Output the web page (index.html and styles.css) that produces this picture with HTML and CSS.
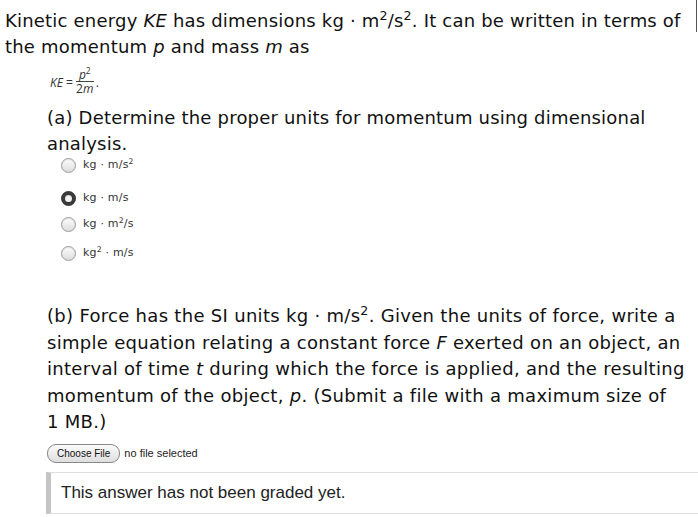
FILE: index.html
```html
<!DOCTYPE html>
<html lang="en">
<head>
    <meta charset="UTF-8">
    <meta name="viewport" content="width=device-width, initial-scale=1.0">
    <title>Kinetic Energy - Momentum</title>
    <link rel="stylesheet" href="styles.css">
</head>
<body>
    <div class="edge"></div>
    <div class="question">
        <p class="intro">Kinetic energy <i>KE</i> has dimensions kg &middot; m<sup>2</sup>/s<sup>2</sup>. It can be written in terms of the momentum <i>p</i> and mass <i>m</i> as</p>

        <div class="formula">
            <span><i>KE</i> =</span>
            <span class="frac">
                <span class="num"><i>p</i><sup>2</sup></span>
                <span class="den">2<i>m</i></span>
            </span>
            <span class="dot">.</span>
        </div>

        <div class="part">
            <p>(a) Determine the proper units for momentum using dimensional analysis.</p>
            <ul class="options">
                <li class="tall"><span class="radio"></span><span>kg &middot; m/s<sup>2</sup></span></li>
                <li><span class="radio checked"></span><span>kg &middot; m/s</span></li>
                <li class="gap"><span class="radio"></span><span>kg &middot; m<sup>2</sup>/s</span></li>
                <li><span class="radio"></span><span>kg<sup>2</sup> &middot; m/s</span></li>
            </ul>
        </div>

        <div class="part part-b">
            <p>(b) Force has the SI units kg &middot; m/s<sup>2</sup>. Given the units of force, write a simple equation relating a constant force <i>F</i> exerted on an object, an interval of time <i>t</i> during which the force is applied, and the resulting momentum of the object, <i>p</i>. (Submit a file with a maximum size of 1&nbsp;MB.)</p>
            <div class="file-row">
                <span class="file-btn">Choose File</span>
                <span class="file-name">no file selected</span>
            </div>
            <div class="graded">This answer has not been graded yet.</div>
        </div>
    </div>
</body>
</html>
```

FILE: styles.css
```css
body {
    margin: 0;
    font-family: "DejaVu Sans", Verdana, sans-serif;
    color: #111;
    background: #fff;
    overflow: hidden;
}

.edge {
    position: absolute;
    top: 0;
    right: 1px;
    width: 1px;
    height: 32px;
    background: #555;
}

.question {
    padding: 8px 0 0 5px;
}

p {
    margin: 0;
}

sup {
    font-size: 0.7em;
    line-height: 0;
    vertical-align: 0.55em;
}

.intro {
    font-size: 18px;
    line-height: 26px;
    letter-spacing: 0.2px;
    width: 690px;
}

.formula {
    display: flex;
    align-items: center;
    gap: 3px;
    margin: 8px 0 0 45px;
    font-family: "Open Sans", sans-serif;
    font-size: 12px;
    color: #333;
}

.frac {
    display: inline-flex;
    flex-direction: column;
    align-items: center;
}

.num {
    border-bottom: 1px solid #444;
    padding: 0 3px;
    line-height: 13px;
}

.den {
    line-height: 14px;
}

.dot {
    margin-left: -1px;
}

.part {
    margin: 9px 0 0 42px;
    font-size: 18px;
    line-height: 26px;
    letter-spacing: 0.2px;
}

.part p {
    width: 648px;
}

.options {
    list-style: none;
    margin: -5px 0 0;
    padding: 0 0 0 14px;
    font-size: 11px;
    letter-spacing: 0.2px;
    line-height: 14px;
    color: #333;
}

.options li {
    display: flex;
    align-items: center;
    gap: 7px;
    height: 26px;
}

.options li.tall {
    margin-bottom: 7px;
}

.options li.gap {
    margin-bottom: 3px;
}

.radio {
    width: 13px;
    height: 13px;
    border-radius: 50%;
    border: 1px solid #9a9a9a;
    background: linear-gradient(#fdfdfd, #dcdcdc);
    box-shadow: inset 0 1px 1px rgba(0, 0, 0, 0.1);
}

.radio.checked {
    width: 7px;
    height: 7px;
    border: 4px solid #3a3a3a;
    background: #f2f2f2;
}

.part-b {
    margin-top: 37px;
    letter-spacing: 0.3px;
}

.part-b p {
    width: 640px;
    line-height: 26.5px;
}

.file-row {
    display: flex;
    align-items: center;
    gap: 4px;
    margin-top: 8px;
    font-family: "Liberation Sans", Arial, sans-serif;
    font-size: 11px;
    line-height: normal;
    letter-spacing: 0;
}

.file-btn {
    height: 17px;
    line-height: 17px;
    padding: 0 9px;
    border: 1px solid #888;
    border-radius: 9px;
    background: linear-gradient(#fbfbfb, #dedede);
    color: #111;
    font-size: 10px;
}

.file-name {
    color: #222;
}

.graded {
    margin: 9px 0 0 -1px;
    padding: 10px 0 10px 10px;
    border-left: 5px solid #c4c4c4;
    border-top: 1px solid #ddd;
    border-bottom: 1px solid #ddd;
    font-family: "Liberation Sans", Arial, sans-serif;
    font-size: 17px;
    line-height: 20px;
    letter-spacing: 0;
    color: #222;
}
```
